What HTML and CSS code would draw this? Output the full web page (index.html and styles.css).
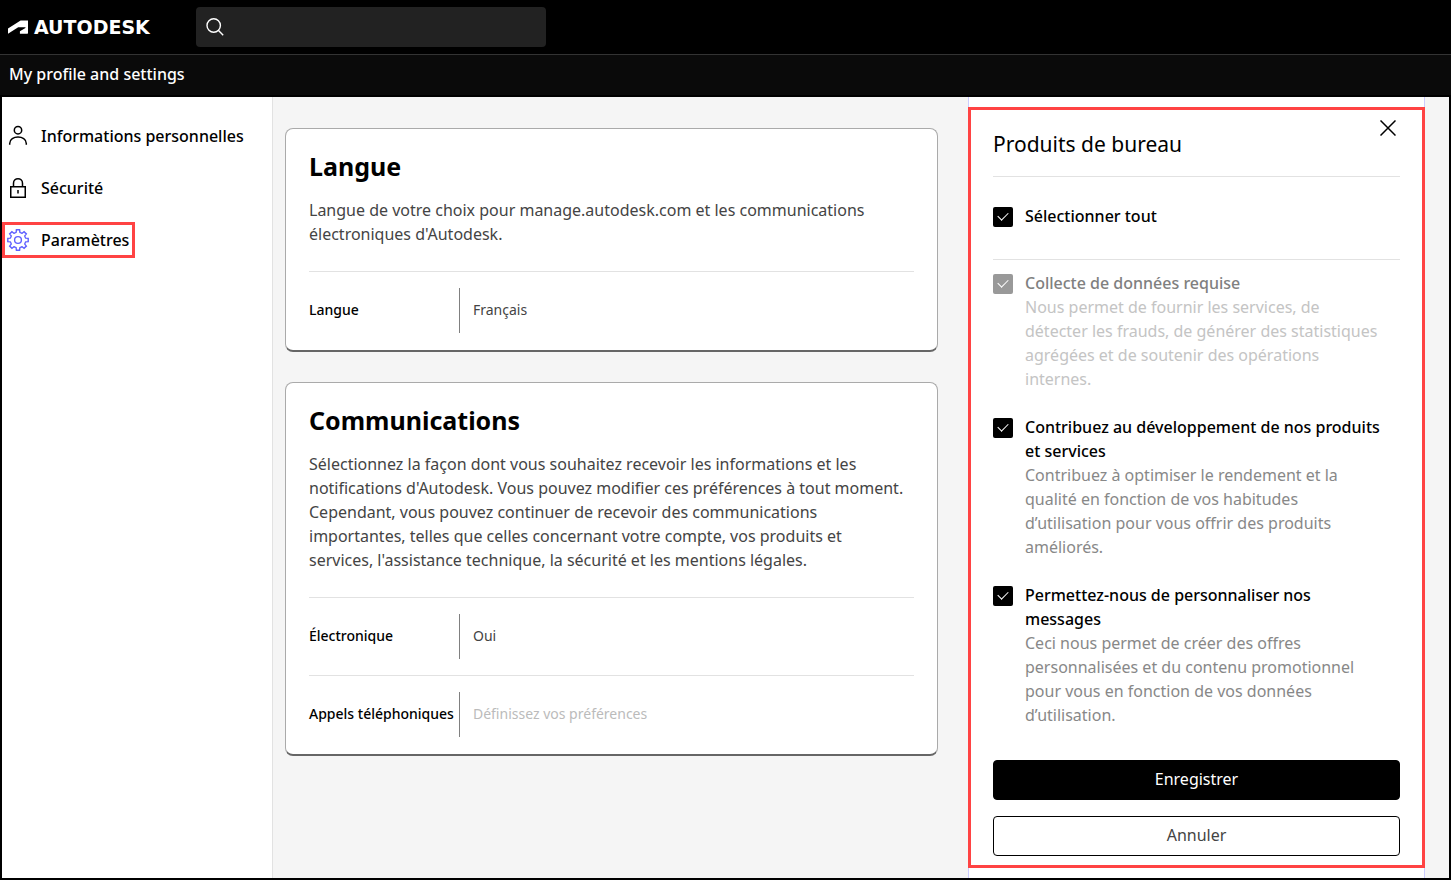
FILE: index.html
```html
<!DOCTYPE html>
<html lang="fr">
<head>
    <meta charset="UTF-8">
    <meta name="viewport" content="width=device-width, initial-scale=1.0">
    <title>My profile and settings</title>
    <link rel="stylesheet" href="styles.css">
</head>
<body>

<header class="topbar">
    <a href="#" class="logo">
        <svg width="20" height="14" viewBox="0 0 20 14" fill="#fff" aria-hidden="true">
            <path d="M0 13.7V8.6L12.6 0.6H20V13.1Q20 13.7 19.4 13.7H11.9V11.2L17.4 7.9Q17.9 7.4 17.2 7.3H10.2Z"/>
        </svg>
        <span class="logo-text">AUTODESK</span>
    </a>
    <div class="search">
        <svg width="20" height="20" viewBox="0 0 20 20" fill="none" stroke="#fff" stroke-width="1.4" aria-hidden="true">
            <circle cx="8.7" cy="8.5" r="6.7"/>
            <path d="M13.3 13.3L18.2 18.2"/>
        </svg>
        <input type="search" class="search-input" aria-label="Search">
    </div>
</header>

<div class="subbar">My profile and settings</div>

<div class="page">
    <nav class="sidebar">
        <a href="#" class="nav-item">
            <svg width="24" height="24" viewBox="0 0 24 24" fill="none" stroke="#000" stroke-width="1.5" aria-hidden="true">
                <circle cx="12" cy="6.2" r="3.7"/>
                <path d="M3.7 20.7V19.5C3.7 10.9 20.3 10.9 20.3 19.5V20.7"/>
            </svg>
            Informations personnelles
        </a>
        <a href="#" class="nav-item">
            <svg width="24" height="24" viewBox="0 0 24 24" fill="none" stroke="#000" stroke-width="1.5" aria-hidden="true">
                <rect x="4.75" y="10.75" width="14.5" height="10.5"/>
                <path d="M7.5 10.5V7.2C7.5 1.2 16.5 1.2 16.5 7.2V10.5M12 14V17.5"/>
            </svg>
            Sécurité
        </a>
        <a href="#" class="nav-item active">
            <svg width="24" height="24" viewBox="-12 -12 24 24" fill="none" stroke="#5f60ff" stroke-width="1.4" aria-hidden="true">
                <path id="tooth" d="M-2.9 -7L-1.9 -7.7L-1.6 -10.2H1.6L1.9 -7.7L2.9 -7"/>
                <use href="#tooth" transform="rotate(45)"/>
                <use href="#tooth" transform="rotate(90)"/>
                <use href="#tooth" transform="rotate(135)"/>
                <use href="#tooth" transform="rotate(180)"/>
                <use href="#tooth" transform="rotate(225)"/>
                <use href="#tooth" transform="rotate(270)"/>
                <use href="#tooth" transform="rotate(315)"/>
                <circle r="3.4"/>
            </svg>
            Paramètres
        </a>
    </nav>

    <main class="content">
        <section class="card">
            <h2>Langue</h2>
            <p>Langue de votre choix pour manage.autodesk.com et les communications<br>électroniques d'Autodesk.</p>
            <div class="row">
                <div class="row-label">Langue</div>
                <div class="row-value">Français</div>
            </div>
        </section>

        <section class="card">
            <h2>Communications</h2>
            <p>Sélectionnez la façon dont vous souhaitez recevoir les informations et les<br>notifications d'Autodesk. Vous pouvez modifier ces préférences à tout moment.<br>Cependant, vous pouvez continuer de recevoir des communications<br>importantes, telles que celles concernant votre compte, vos produits et<br>services, l'assistance technique, la sécurité et les mentions légales.</p>
            <div class="row">
                <div class="row-label">Électronique</div>
                <div class="row-value">Oui</div>
            </div>
            <div class="row">
                <div class="row-label">Appels téléphoniques</div>
                <div class="row-value empty">Définissez vos préférences</div>
            </div>
        </section>
    </main>

    <aside class="panel">
        <form class="panel-box">
            <button type="button" class="close" aria-label="Fermer">
                <svg width="16" height="16" viewBox="0 0 16 16" fill="none" stroke="#000" stroke-width="1.5" aria-hidden="true">
                    <path d="M0.5 0.5L15.5 15.5M15.5 0.5L0.5 15.5"/>
                </svg>
            </button>
            <h3>Produits de bureau</h3>

            <div class="option select-all">
                <input type="checkbox" id="all" checked>
                <label for="all">Sélectionner tout</label>
            </div>

            <div class="options">
                <div class="option disabled">
                    <input type="checkbox" id="required" checked disabled>
                    <div>
                        <label for="required">Collecte de données requise</label>
                        <p>Nous permet de fournir les services, de<br>détecter les frauds, de générer des statistiques<br>agrégées et de soutenir des opérations<br>internes.</p>
                    </div>
                </div>
                <div class="option">
                    <input type="checkbox" id="develop" checked>
                    <div>
                        <label for="develop">Contribuez au développement de nos produits<br>et services</label>
                        <p>Contribuez à optimiser le rendement et la<br>qualité en fonction de vos habitudes<br>d’utilisation pour vous offrir des produits<br>améliorés.</p>
                    </div>
                </div>
                <div class="option">
                    <input type="checkbox" id="messages" checked>
                    <div>
                        <label for="messages">Permettez-nous de personnaliser nos<br>messages</label>
                        <p>Ceci nous permet de créer des offres<br>personnalisées et du contenu promotionnel<br>pour vous en fonction de vos données<br>d’utilisation.</p>
                    </div>
                </div>
            </div>

            <div class="buttons">
                <button type="submit" class="btn btn-save">Enregistrer</button>
                <button type="button" class="btn btn-cancel">Annuler</button>
            </div>
        </form>
    </aside>
</div>

</body>
</html>
```
FILE: styles.css
```css
* {
    box-sizing: border-box;
}

body {
    margin: 0;
    min-height: 100vh;
    display: flex;
    flex-direction: column;
    font-family: "Noto Sans", sans-serif;
    font-size: 16px;
    line-height: 24px;
    color: #000;
    background-color: #000;
}

h2, h3, p {
    margin: 0;
}

a {
    color: inherit;
    text-decoration: none;
}

.topbar {
    display: flex;
    align-items: center;
    height: 55px;
    padding-left: 8px;
    border-bottom: 1px solid #333;
}

.logo {
    display: flex;
    align-items: center;
    gap: 6px;
    width: 188px;
    color: #fff;
}

.logo-text {
    font-family: "DejaVu Sans", sans-serif;
    font-size: 19px;
    font-weight: 700;
}

.search {
    display: flex;
    align-items: center;
    width: 350px;
    height: 40px;
    padding: 0 9px;
    border-radius: 4px;
    background-color: #222;
}

.search-input {
    flex: 1;
    height: 100%;
    border: none;
    outline: none;
    background: none;
    color: #fff;
    font: inherit;
}

.subbar {
    height: 42px;
    padding: 7px 9px;
    border-bottom: 2px solid #000;
    background-color: #0a0a0a;
    color: #fff;
    font-weight: 500;
}

.page {
    flex: 1;
    display: flex;
    padding-right: 24px;
    border: 2px solid #000;
    border-top: none;
    background-color: #f5f5f5;
}

.sidebar {
    display: flex;
    flex-direction: column;
    align-items: flex-start;
    gap: 16px;
    width: 271px;
    padding-top: 21px;
    border-right: 1px solid #e2e2e2;
    background-color: #fff;
}

.nav-item {
    display: flex;
    align-items: center;
    gap: 11px;
    height: 36px;
    padding: 0 3px 0 1px;
    border: 3px solid transparent;
    font-weight: 500;
}

.nav-item.active {
    border-color: #ff4343;
}

.content {
    flex: 1;
    display: flex;
    flex-direction: column;
    gap: 30px;
    padding: 31px 30px 31px 12px;
}

.card {
    padding: 21px 23px 1px;
    border: 1px solid #aaa;
    border-bottom: 2px solid #666;
    border-radius: 8px;
    background-color: #fff;
}

.card h2 {
    margin-bottom: 16px;
    font-size: 25px;
    font-weight: 700;
    line-height: 32px;
}

.card p {
    margin-bottom: 25px;
    color: #444;
    white-space: nowrap;
}

.row {
    display: flex;
    padding: 16px 0;
    border-top: 1px solid #e2e2e2;
    font-size: 14px;
    line-height: 43px;
}

.row-label {
    width: 150px;
    padding-bottom: 2px;
    font-weight: 500;
    white-space: nowrap;
}

.row-value {
    padding: 0 0 2px 13px;
    border-left: 1px solid #808080;
    color: #444;
}

.row-value.empty {
    color: #bbb;
}

.panel {
    width: 457px;
    padding: 10px 0;
    background-color: #fff;
    box-shadow: inset 1px 0 #ccf, inset -1px 0 #ccf;
}

.panel-box {
    position: relative;
    padding: 22px 22px 9px;
    border: 3px solid #ff4343;
}

.close {
    position: absolute;
    top: 6px;
    right: 22px;
    display: flex;
    align-items: center;
    justify-content: center;
    width: 24px;
    height: 24px;
    padding: 0;
    border: none;
    background: none;
    cursor: pointer;
}

.panel h3 {
    padding-bottom: 20px;
    border-bottom: 1px solid #e2e2e2;
    font-size: 21px;
    font-weight: 400;
}

.option {
    display: flex;
    gap: 12px;
}

.option input {
    appearance: none;
    flex-shrink: 0;
    display: flex;
    align-items: center;
    justify-content: center;
    width: 20px;
    height: 20px;
    margin: 3px 0 0;
    border-radius: 2px;
    background-color: #000;
}

.option input:checked::after {
    content: "";
    width: 9px;
    height: 5px;
    margin-bottom: 4px;
    border-left: 1px solid #fff;
    border-bottom: 1px solid #fff;
    transform: rotate(-45deg);
}

.option label {
    display: block;
    font-weight: 500;
    white-space: nowrap;
}

.option p {
    color: #888;
    white-space: nowrap;
}

.option.disabled input {
    background-color: #999;
}

.option.disabled label {
    color: #808080;
}

.option.disabled p {
    color: #c4c4c4;
}

.select-all {
    padding: 27px 0 31px;
    border-bottom: 1px solid #e2e2e2;
}

.options {
    display: flex;
    flex-direction: column;
    gap: 24px;
    padding: 11px 0 33px;
}

.buttons {
    display: flex;
    flex-direction: column;
    gap: 16px;
}

.btn {
    height: 40px;
    padding-bottom: 3px;
    border: 1px solid #000;
    border-radius: 4px;
    font: inherit;
    cursor: pointer;
}

.btn-save {
    background-color: #000;
    color: #fff;
}

.btn-cancel {
    background-color: #fff;
    color: #444;
}
```
